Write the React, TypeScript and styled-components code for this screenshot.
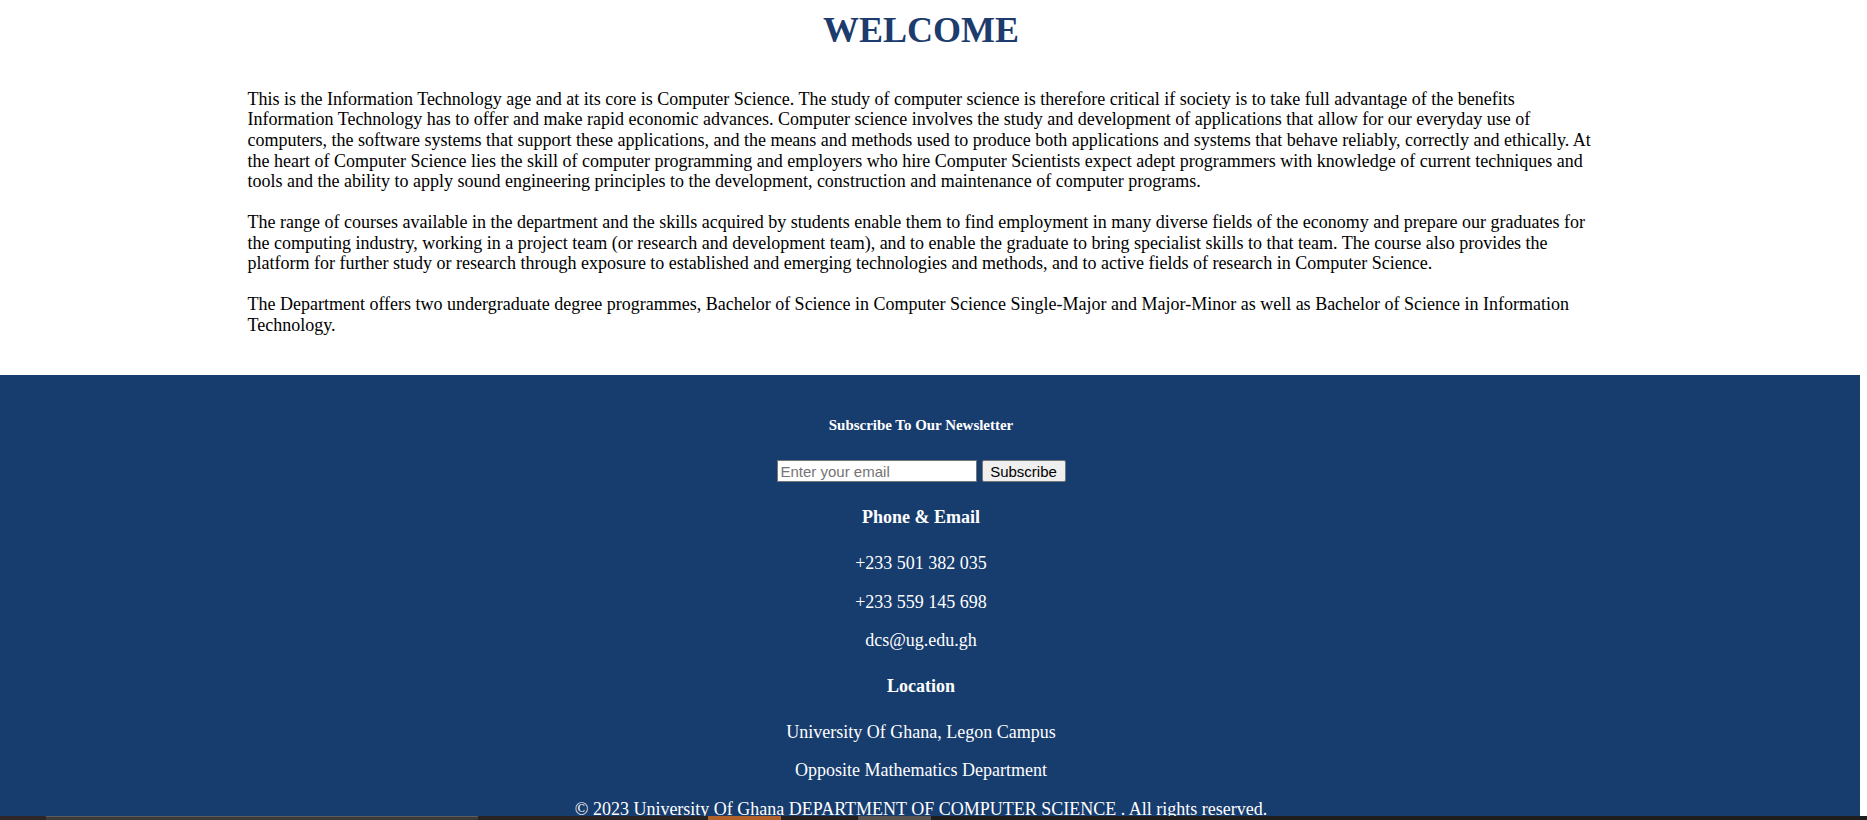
import React from "react";
import styled, { createGlobalStyle } from "styled-components";

const GlobalStyle = createGlobalStyle`
  html, body {
    margin: 0;
    padding: 0;
    background: #ffffff;
  }
  body {
    font-family: "Liberation Serif", "Times New Roman", serif;
    color: #000000;
    overflow: hidden;
  }
`;

const Page = styled.div`
  width: 1860px;
`;

const Main = styled.main`
  width: 1842px;
  padding: 10px 0 19.5px;
`;

const Content = styled.section`
  width: 1347px;
  margin: 0 auto;
`;

const Title = styled.h1`
  margin: 0 0 37.5px;
  font-size: 36px;
  line-height: 41px;
  font-weight: 700;
  text-align: center;
  color: #1d3b6d;
`;

const Paragraph = styled.p`
  margin: 0 0 20px;
  font-size: 18px;
  line-height: 20.7px;
`;

const Footer = styled.footer`
  width: 1860px;
  box-sizing: border-box;
  padding: 42px 18px 40px 0;
  background: #173c6e;
  color: #ffffff;
  text-align: center;
  font-size: 18px;
`;

const NewsTitle = styled.h5`
  margin: 0 0 26px;
  font-size: 14.94px;
  line-height: 17.2px;
  font-weight: 700;
`;

const SubscribeForm = styled.form`
  display: flex;
  justify-content: center;
  gap: 5px;
  margin: 0;
  height: 22px;
`;

const EmailInput = styled.input`
  box-sizing: border-box;
  width: 200px;
  height: 22px;
  padding: 1px 3px;
  border: 1px solid #767676;
  border-radius: 0;
  background: #ffffff;
  font-family: "Liberation Sans", Arial, sans-serif;
  font-size: 15px;
  color: #000000;
  outline: none;
  &::placeholder {
    color: #757575;
  }
`;

const SubscribeButton = styled.button`
  box-sizing: border-box;
  width: 84px;
  height: 22px;
  padding: 0;
  border: 1px solid #767676;
  border-radius: 2px;
  background: #efefef;
  font-family: "Liberation Sans", Arial, sans-serif;
  font-size: 15px;
  color: #000000;
`;

const SectionTitle = styled.h4`
  margin: 25px 0;
  font-size: 18px;
  line-height: 20.7px;
  font-weight: 700;
`;

const InfoLine = styled.p`
  margin: 18px 0;
  font-size: 18px;
  line-height: 20.7px;
`;

const Taskbar = styled.div`
  position: fixed;
  left: 0;
  bottom: 0;
  width: 100%;
  height: 4px;
  display: flex;
  background: #1f1d1d;
`;

const TaskSlot = styled.div<{ $w: number; $bg: string; $top?: string }>`
  flex: 0 0 ${(p) => p.$w}px;
  height: 100%;
  background: ${(p) => p.$bg};
  box-sizing: border-box;
  border-top: ${(p) => (p.$top ? `1px solid ${p.$top}` : "none")};
`;

export default function App() {
  return (
    <>
      <GlobalStyle />
      <Page>
        <Main>
          <Content>
            <Title>WELCOME</Title>
            <Paragraph>
              This is the Information Technology age and at its core is Computer Science. The study of computer science is
              therefore critical if society is to take full advantage of the benefits Information Technology has to offer and
              make rapid economic advances. Computer science involves the study and development of applications that allow for
              our everyday use of computers, the software systems that support these applications, and the means and methods
              used to produce both applications and systems that behave reliably, correctly and ethically. At the heart of
              Computer Science lies the skill of computer programming and employers who hire Computer Scientists expect adept
              programmers with knowledge of current techniques and tools and the ability to apply sound engineering principles
              to the development, construction and maintenance of computer programs.
            </Paragraph>
            <Paragraph>
              The range of courses available in the department and the skills acquired by students enable them to find
              employment in many diverse fields of the economy and prepare our graduates for the computing industry, working in
              a project team (or research and development team), and to enable the graduate to bring specialist skills to that
              team. The course also provides the platform for further study or research through exposure to established and
              emerging technologies and methods, and to active fields of research in Computer Science.
            </Paragraph>
            <Paragraph>
              The Department offers two undergraduate degree programmes, Bachelor of Science in Computer Science Single-Major
              and Major-Minor as well as Bachelor of Science in Information Technology.
            </Paragraph>
          </Content>
        </Main>
        <Footer>
          <NewsTitle>Subscribe To Our Newsletter</NewsTitle>
          <SubscribeForm onSubmit={(e) => e.preventDefault()}>
            <EmailInput type="email" placeholder="Enter your email" />
            <SubscribeButton type="submit">Subscribe</SubscribeButton>
          </SubscribeForm>
          <SectionTitle>Phone &amp; Email</SectionTitle>
          <InfoLine>+233 501 382 035</InfoLine>
          <InfoLine>+233 559 145 698</InfoLine>
          <InfoLine>dcs@ug.edu.gh</InfoLine>
          <SectionTitle>Location</SectionTitle>
          <InfoLine>University Of Ghana, Legon Campus</InfoLine>
          <InfoLine>Opposite Mathematics Department</InfoLine>
          <InfoLine>© 2023 University Of Ghana DEPARTMENT OF COMPUTER SCIENCE . All rights reserved.</InfoLine>
        </Footer>
      </Page>
      <Taskbar>
        <TaskSlot $w={46} $bg="#2f2628" />
        <TaskSlot $w={432} $bg="#3a3a3a" $top="#5c5c5c" />
        <TaskSlot $w={230} $bg="#2a2324" />
        <TaskSlot $w={73} $bg="#b0612a" />
        <TaskSlot $w={77} $bg="#252020" />
        <TaskSlot $w={73} $bg="#5a5450" />
        <TaskSlot $w={936} $bg="#1f1e1e" />
      </Taskbar>
    </>
  );
}
